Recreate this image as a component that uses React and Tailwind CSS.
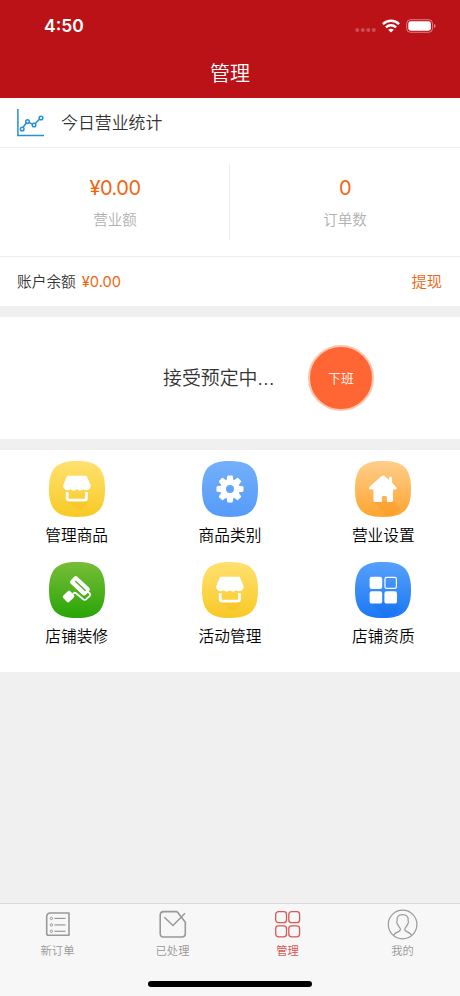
const SQUIRCLE = "M28 0C48.5 0 56 7.5 56 28S48.5 56 28 56 0 48.5 0 28 7.5 0 28 0Z";

const Tile = ({ id, from, to, children }) => (
  <svg className="block h-14 w-14 shrink-0" viewBox="0 0 56 56" fill="none">
    <defs>
      <linearGradient id={id} x1="0" y1="0" x2="0" y2="1">
        <stop offset="0" stopColor={from} />
        <stop offset="1" stopColor={to} />
      </linearGradient>
    </defs>
    <path d={SQUIRCLE} fill={`url(#${id})`} />
    {children}
  </svg>
);

const ShopIcon = ({ id }) => (
  <Tile id={id} from="#ffe170" to="#f8c925">
    <path d="M17 40H38V44L30 49Z" fill="#eeb914" opacity="0.25" />
    <path
      d="M18.6 15.4H37.2L41 24.6C41 28.6 36 29.6 34.2 27.2C32.7 29.5 29.4 29.5 27.9 27.2C26.4 29.5 23.1 29.5 21.6 27.2C19.8 29.6 14.8 28.6 14.8 24.6Z"
      fill="#fff"
      stroke="#fff"
      strokeWidth="1.4"
      strokeLinejoin="round"
    />
    <path d="M18.2 31V37Q18.2 39.2 20.4 39.2H35.3Q37.5 39.2 37.5 37V31" stroke="#fff" strokeWidth="2.8" />
  </Tile>
);

const GearIcon = ({ id }) => (
  <Tile id={id} from="#74b0fb" to="#559bf9">
    <g fill="#fff">
      {[0, 45, 90, 135, 180, 225, 270, 315].map((angle) => (
        <path key={angle} d="M24.4 20.5L25.2 15.3Q25.4 14.5 26.2 14.5H29.8Q30.6 14.5 30.8 15.3L31.6 20.5Z" transform={`rotate(${angle} 28 28)`} />
      ))}
    </g>
    <circle cx="28" cy="28" r="6.8" stroke="#fff" strokeWidth="5.6" />
  </Tile>
);

const HouseIcon = ({ id }) => (
  <Tile id={id} from="#ffce8c" to="#fea42f">
    <path d="M18.7 40H37.8L46 48Q40 55 31 55Z" fill="#f69318" opacity="0.3" />
    <path
      d="M26.6 15Q28 13.9 29.4 15L34 19V17.1Q34 15.8 35.1 15.8H36Q37.1 15.8 37.1 17.1V21.8L41 25.8Q42.6 28.4 40.2 28.6H38V39.6Q38 41 36.6 41H31.9V36.3Q31.9 35 30.6 35H28.2Q26.9 35 26.9 36.3V41H19.9Q18.5 41 18.5 39.6V28.6H15.6Q12.9 28.4 14.6 25.8Z"
      fill="#fff"
    />
  </Tile>
);

const RollerIcon = ({ id }) => (
  <Tile id={id} from="#78bd38" to="#28a506">
    <g transform="rotate(43 31 23.8)">
      <rect x="20.6" y="19" width="20.8" height="9.6" rx="2.6" fill="#fff" />
      <path d="M25 23.6H38" stroke="#52ad23" strokeWidth="1.4" strokeLinecap="round" />
    </g>
    <path
      d="M39.4 30.2L40.7 31.5Q41.8 32.6 40.7 33.8L37.3 37.2Q35.9 38.5 34.2 37.3L27 31.2Q25.7 30.2 24.5 31.3L22.5 33.2"
      stroke="#fff"
      strokeWidth="1.8"
      strokeLinecap="round"
    />
    <rect x="14.7" y="30.1" width="9.8" height="8.8" rx="1.8" fill="#fff" transform="rotate(-43 19.6 34.5)" />
  </Tile>
);

const BlocksIcon = ({ id }) => (
  <Tile id={id} from="#56a0fa" to="#1c78f5">
    <path d="M16 41H41L46 46Q40 54 30 55Z" fill="#0f65e5" opacity="0.2" />
    <rect x="14.6" y="14.8" width="12.6" height="12.2" rx="2.2" fill="#fff" />
    <rect x="14.6" y="29.2" width="12.6" height="12.4" rx="2.2" fill="#fff" />
    <rect x="29.4" y="29.2" width="12.6" height="12.4" rx="2.2" fill="#fff" />
    <rect x="30" y="15.4" width="11.4" height="11" rx="1.6" stroke="#fff" strokeWidth="1.2" />
  </Tile>
);

const menu = [
  { label: "管理商品", Icon: ShopIcon },
  { label: "商品类别", Icon: GearIcon },
  { label: "营业设置", Icon: HouseIcon },
  { label: "店铺装修", Icon: RollerIcon },
  { label: "活动管理", Icon: ShopIcon },
  { label: "店铺资质", Icon: BlocksIcon }
];

const OrdersIcon = () => (
  <svg className="block h-8 w-8" viewBox="0 0 32 32" fill="none" stroke="currentColor">
    <path d="M8.5 5H27V27.2H6.5Q4.7 27.2 4.7 25.4V8.8Q4.7 5 8.5 5Z" strokeWidth="1.6" strokeLinejoin="round" />
    {[10.4, 16.9, 23.3].map((y) => (
      <g key={y}>
        <circle cx="9.4" cy={y} r="1.2" strokeWidth="1" />
        <path d={`M12.5 ${y}H23.5`} strokeWidth="1.2" />
      </g>
    ))}
  </svg>
);

const DoneIcon = () => (
  <svg className="block h-8 w-8" viewBox="0 0 32 32" fill="none" stroke="currentColor">
    <path d="M19.3 3.6H6.4Q3.2 3.8 3.2 7.1V25.6Q3.2 29 6.4 29H25Q28.3 29 28.3 25.8V14.2L20.8 4.6Q20.2 3.6 19.3 3.6Z" strokeWidth="1.6" />
    <path d="M7.3 9.2L16 17.5L28 5.3" strokeWidth="1.5" />
  </svg>
);

const ManageIcon = () => (
  <svg className="block h-8 w-8" viewBox="0 0 32 32" fill="none" stroke="currentColor" strokeWidth="1.3">
    <rect x="3.7" y="3.7" width="10.8" height="11" rx="2.8" />
    <rect x="16.8" y="3.7" width="10.8" height="11" rx="2.8" />
    <rect x="3.7" y="17.8" width="10.8" height="11" rx="2.8" />
    <rect x="16.8" y="17.8" width="10.8" height="11" rx="2.8" />
  </svg>
);

const MineIcon = () => (
  <svg className="block h-8 w-8" viewBox="0 0 32 32" fill="none" stroke="currentColor" strokeWidth="1.2">
    <circle cx="15.6" cy="16.5" r="14.3" />
    <path d="M6.9 27.5C7.4 23.3 13.4 24.8 13.4 21.2C13.4 19.7 11.6 19.3 10.8 16.5C9.8 15.8 9.6 13.5 10.1 12.5C9.6 8.7 11.8 6.7 15.6 6.7S21.6 8.7 21.1 12.5C21.6 13.5 21.4 15.8 20.4 16.5C19.6 19.3 17.8 19.7 17.8 21.2C17.8 24.8 23.8 23.3 24.3 27.5" />
  </svg>
);

const tabs = [
  { label: "新订单", Icon: OrdersIcon },
  { label: "已处理", Icon: DoneIcon },
  { label: "管理", Icon: ManageIcon, active: true },
  { label: "我的", Icon: MineIcon }
];

const Header = () => (
  <header className="h-[98px] bg-[#bb1218] text-white">
    <div className="flex h-[49px] items-center justify-between pt-[3px] pr-6 pl-11">
      <span className="text-[17.5px] leading-none font-semibold">4:50</span>
      <div className="flex items-center">
        <svg className="mt-2 block h-1 w-[22px]" viewBox="0 0 22 4" fill="#fff" opacity="0.25">
          <circle cx="2.2" cy="2" r="2" />
          <circle cx="7.8" cy="2" r="2" />
          <circle cx="13.3" cy="2" r="2" />
          <circle cx="18.8" cy="2" r="2" />
        </svg>
        <svg className="ml-[5px] block h-[14px] w-[18px]" viewBox="0 0 18 14" fill="none" stroke="#fff" strokeWidth="2.4">
          <path d="M.9 5.1C5.4.7 12.6.7 17.1 5.1" />
          <path d="M3.9 8.3C6.8 5.5 11.2 5.5 14.1 8.3" />
          <path d="M9 13.6L6.2 10.8C7.8 9.4 10.2 9.4 11.8 10.8Z" fill="#fff" stroke="none" />
        </svg>
        <svg className="ml-1.5 block h-[14px] w-[30px]" viewBox="0 0 30 14" fill="none">
          <rect x=".7" y=".7" width="25.8" height="12.6" rx="3.8" stroke="#fff" strokeOpacity=".45" />
          <rect x="2.3" y="2.3" width="22.6" height="9.4" rx="2.4" fill="#fff" />
          <path d="M28 5V9Q29.6 8.4 29.6 7T28 5Z" fill="#fff" opacity=".5" />
        </svg>
      </div>
    </div>
    <h1 className="flex h-[49px] items-center justify-center pt-px text-[20px] leading-none">管理</h1>
  </header>
);

const Stat = ({ value, label }) => (
  <div className="flex flex-1 flex-col items-center pt-[14px]">
    <span className="text-[20px] leading-5 font-normal tracking-[-0.5px] text-[#f26410]">{value}</span>
    <span className="mt-3 text-[14.5px] leading-5 text-[#b0b0b0]">{label}</span>
  </div>
);

export default function App() {
  return (
    <div className="flex h-[996px] w-[460px] flex-col overflow-hidden bg-[#f0f0f0] font-['Inter','Noto_Sans_CJK_SC',sans-serif] font-[350] text-[#333]">
      <Header />

      <section className="h-[208px] bg-white">
        <div className="flex h-[50px] items-center border-b border-[#ededed] pl-[17px]">
          <svg className="block h-7 w-7" viewBox="0 0 28 28" fill="none" stroke="#2590d3" strokeWidth="1.5">
            <path d="M.9 0V26.5H27" />
            <path d="M6.2 18.3L9.3 13.8M12 13.3L15.4 15.2M18.3 14.6L22.6 10" />
            <circle cx="5.2" cy="20" r="1.8" />
            <circle cx="10.5" cy="12.6" r="1.8" />
            <circle cx="17" cy="16" r="1.8" />
            <circle cx="24" cy="9" r="1.8" />
          </svg>
          <h2 className="ml-4 pt-0.5 text-[16.9px] leading-none">今日营业统计</h2>
        </div>
        <div className="flex h-[109px] border-b border-[#ededed] py-4">
          <Stat value="¥0.00" label="营业额" />
          <div className="-ml-px w-px bg-[#ededed]" />
          <Stat value="0" label="订单数" />
        </div>
        <div className="flex h-[49px] items-center justify-between pt-0.5 pr-[18px] pl-[17px]">
          <p className="text-[14.7px] leading-none">
            账户余额<span className="ml-1.5 font-normal text-[#f26410]">¥0.00</span>
          </p>
          <button type="button" className="pb-0.5 text-[15.3px] leading-none text-[#f26410]">
            提现
          </button>
        </div>
      </section>

      <section className="mt-[11px] flex h-[122px] items-center bg-white pl-[163px]">
        <p className="w-[145px] pt-[3px] text-[18.9px] leading-none">
          接受预定中<span className="tracking-[0.5px]">...</span>
        </p>
        <button
          type="button"
          className="h-[66px] w-[66px] rounded-full border-2 border-[#ffc5ad] bg-[#ff6633] pt-0.5 text-[13px] text-white"
        >
          下班
        </button>
      </section>

      <section className="mt-[11px] grid h-[222px] grid-cols-3 content-start gap-y-4 bg-white pt-[11px]">
        {menu.map(({ label, Icon }, index) => (
          <div key={label} className="flex h-[85px] flex-col items-center">
            <Icon id={`tile-${index}`} />
            <span className="mt-[9px] text-[15.7px] leading-5 text-black">{label}</span>
          </div>
        ))}
      </section>

      <nav className="mt-auto h-[93px] border-t border-[#d9d9d9] bg-[#f7f7f7]">
        <div className="flex h-[77px] pt-1">
          {tabs.map(({ label, Icon, active }) => (
            <div key={label} className={`flex flex-1 flex-col items-center ${active ? "text-[#d95757]" : "text-[#999]"}`}>
              <Icon />
              <span className={`mt-[3px] text-[11.3px] leading-4 ${active ? "font-normal" : "text-[#999]"}`}>{label}</span>
            </div>
          ))}
        </div>
        <div className="mx-auto h-1.5 w-[164px] rounded-full bg-black" />
      </nav>
    </div>
  );
}
